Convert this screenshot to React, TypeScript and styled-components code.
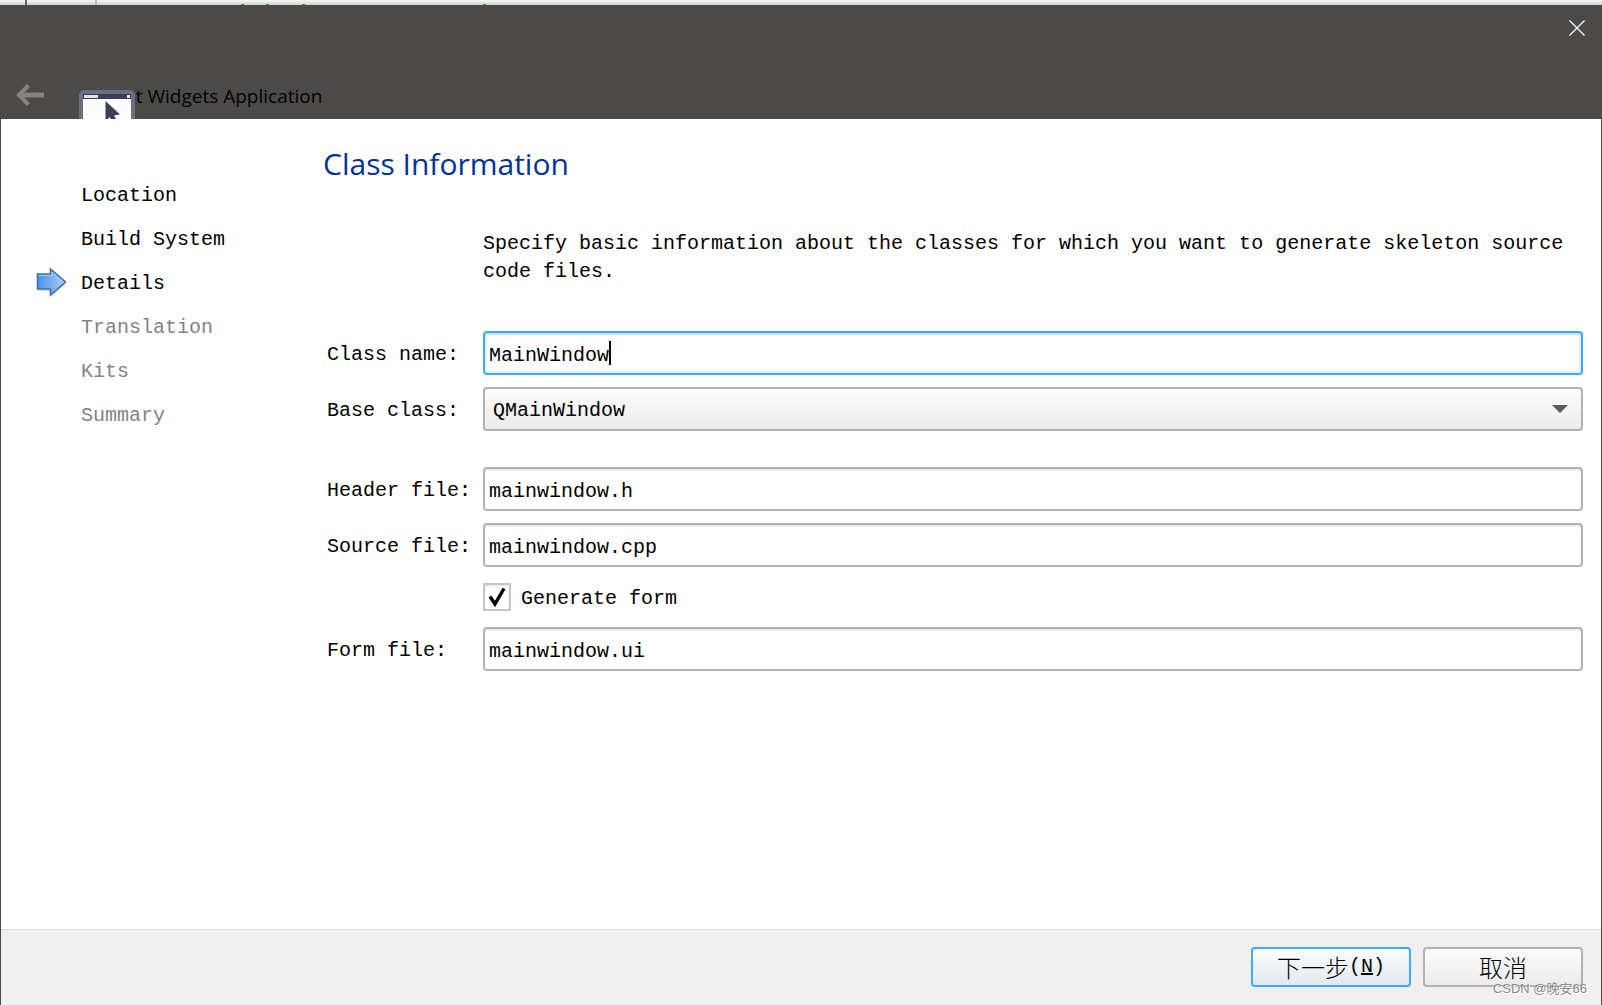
import React, { useState } from "react";
import styled, { createGlobalStyle, css } from "styled-components";

const mono = `"Liberation Mono", "Noto Sans CJK SC", monospace`;
const sans = `"Open Sans", "Noto Sans", "Noto Sans CJK SC", sans-serif`;

const GlobalStyle = createGlobalStyle`
  *, *::before, *::after { box-sizing: border-box; }
  body { margin: 0; font: 20px/28px ${mono}; color: #000; background: #fff; }
  button, input, select { font: inherit; color: inherit; margin: 0; }
`;

const Page = styled.div`
  display: flex;
  flex-direction: column;
  min-height: 100vh;
`;

const EditorStrip = styled.div`
  display: flex;
  height: 5px;
  padding-left: 25px;
  background: linear-gradient(#f6f6f6, #d0d0d0);
`;

const Rule = styled.div<{ $color: string; $gap: number }>`
  width: 2px;
  margin-right: ${(p) => p.$gap}px;
  background: ${(p) => p.$color};
`;

const CodeTip = styled.div<{ $gap: number }>`
  align-self: flex-end;
  width: 3px;
  height: 1px;
  margin-right: ${(p) => p.$gap}px;
  background: #4a9a1c;
`;

const Dialog = styled.div`
  flex: 1;
  display: flex;
  flex-direction: column;
  border: solid #4c4a48;
  border-width: 0 1px;
`;

const Header = styled.header`
  display: flex;
  flex-direction: column;
  justify-content: space-between;
  height: 114px;
  margin: 0 -1px;
  background: #4c4a48;
`;

const TitleBar = styled.div`
  display: flex;
  justify-content: flex-end;
`;

const IconButton = styled.button`
  display: flex;
  align-items: center;
  justify-content: center;
  padding: 0;
  border: 0;
  background: none;
`;

const CloseButton = styled(IconButton)`
  width: 50px;
  height: 45px;
`;

const NavRow = styled.div`
  display: flex;
  align-items: flex-end;
`;

const BackButton = styled(IconButton)`
  margin: 0 35px 12px 16px;
`;

const AppIcon = styled.svg`
  display: block;
  z-index: 1;
`;

const WizardName = styled.h1`
  margin: 0 0 9px -14px;
  font: 400 19px/28px ${sans};
`;

const Body = styled.main`
  flex: 1;
  display: grid;
  grid-template-columns: 322px 1fr;
  padding-right: 18px;
`;

const Steps = styled.ol`
  margin: 0;
  padding: 55px 0 0 35px;
  list-style: none;
`;

const Step = styled.li<{ $pending: boolean }>`
  display: grid;
  grid-template-columns: 45px 1fr;
  align-items: center;
  height: 44px;
  color: ${(p) => (p.$pending ? "#838383" : "#000")};
`;

const StepLabel = styled.span`
  grid-column: 2;
`;

const StepArrow = styled.svg`
  display: block;
`;

const Content = styled.section`
  padding-top: 23px;
`;

const PageTitle = styled.h2`
  margin: 0 0 44px;
  font: 400 30px/44px ${sans};
  color: #003399;
`;

const Intro = styled.p`
  margin: 0 0 45px 160px;
`;

const Form = styled.form`
  display: flex;
  flex-direction: column;
  gap: 12px;
`;

const Row = styled.div<{ $spaced?: boolean }>`
  display: grid;
  grid-template-columns: 156px 1fr;
  align-items: center;
  margin-left: 4px;
  margin-top: ${(p) => (p.$spaced ? 24 : 0)}px;
`;

const Label = styled.label`
  padding-top: 4px;
`;

const Field = styled.div`
  position: relative;
  display: grid;
  align-items: center;
`;

const box = css`
  width: 100%;
  height: 44px;
  border: 2px solid #b2b2b2;
  border-radius: 4px;
  outline: 0;
`;

const TextBox = styled.input<{ $active: boolean }>`
  ${box}
  padding: 4px 4px 0;
  background: #fff;
  box-shadow: inset 0 2px 0 #ececec;
  ${(p) =>
    p.$active &&
    css`
      border-color: #3daaff;
      caret-color: transparent;
      box-shadow: inset 0 2px 0 #cfe2f1, inset 0 0 0 2px #e6f3fd;
    `}
`;

const Caret = styled.span`
  position: absolute;
  width: 2px;
  height: 24px;
  background: #000;
`;

const Select = styled.select`
  ${box}
  appearance: none;
  padding: 4px 40px 0 8px;
  background: linear-gradient(#fdfdfd, #ebebeb);
`;

const SelectArrow = styled.svg`
  position: absolute;
  right: 15px;
  pointer-events: none;
`;

const CheckRow = styled.label`
  display: flex;
  align-items: center;
  gap: 10px;
  height: 28px;
  margin: 4px 0 4px 160px;
`;

const CheckText = styled.span`
  padding-top: 4px;
`;

const CheckBox = styled.input`
  appearance: none;
  display: grid;
  place-items: center;
  width: 28px;
  height: 28px;
  border: 2px solid #c6c6c6;
  background: #fff;
  box-shadow: inset 0 2px 2px #ececec;
`;

const CheckHolder = styled.span`
  position: relative;
  display: grid;
  place-items: center;
`;

const CheckMark = styled.svg`
  position: absolute;
  pointer-events: none;
`;

const Footer = styled.footer`
  position: relative;
  display: flex;
  justify-content: flex-end;
  gap: 12px;
  padding: 17px 18px 18px;
  border-top: 1px solid #dfdfdf;
  background: #f0f0f0;
`;

const PushButton = styled.button<{ $primary?: boolean }>`
  display: flex;
  align-items: center;
  justify-content: center;
  width: 160px;
  height: 40px;
  padding: 0;
  border: 2px solid ${(p) => (p.$primary ? "#3daaff" : "#b2b2b2")};
  border-radius: 4px;
  background: ${(p) =>
    p.$primary ? "linear-gradient(#fcfdfe, #e2e8ed)" : "linear-gradient(#fdfdfd, #ebebeb)"};
`;

const Hanzi = styled.span`
  font-family: "Noto Sans CJK SC", sans-serif;
  font-size: 24px;
  font-weight: 300;
`;

const Watermark = styled.span`
  position: absolute;
  right: 14px;
  bottom: 6px;
  font: 13px/20px "Liberation Sans", "Noto Sans CJK SC", sans-serif;
  color: #8a8a8a;
  text-shadow: 1px 1px 0 #fff;
  pointer-events: none;
`;

const steps = ["Location", "Build System", "Details", "Translation", "Kits", "Summary"];
const current = 2;

function TextRow(props: { id: string; label: string; initial: string; active?: boolean; spaced?: boolean }) {
  const [value, setValue] = useState(props.initial);
  return (
    <Row $spaced={props.spaced}>
      <Label htmlFor={props.id}>{props.label}</Label>
      <Field>
        <TextBox
          id={props.id}
          type="text"
          spellCheck={false}
          $active={!!props.active}
          value={value}
          onChange={(e) => setValue(e.target.value)}
        />
        {props.active && <Caret style={{ left: `calc(6px + ${value.length}ch)` }} />}
      </Field>
    </Row>
  );
}

export default function App() {
  const [form, setForm] = useState(true);
  return (
    <Page>
      <GlobalStyle />
      <EditorStrip>
        <Rule $color="#686868" $gap={68} />
        <Rule $color="#bdbdbd" $gap={144} />
        <CodeTip $gap={22} />
        <CodeTip $gap={33} />
        <CodeTip $gap={178} />
        <CodeTip $gap={0} />
      </EditorStrip>
      <Dialog>
        <Header>
          <TitleBar>
            <CloseButton type="button" aria-label="Close">
              <svg width="16" height="16" viewBox="0 0 16 16" stroke="#fff" strokeWidth="1.3">
                <path d="M.5.5l15 15M15.5.5l-15 15" />
              </svg>
            </CloseButton>
          </TitleBar>
          <NavRow>
            <BackButton type="button" aria-label="Back" disabled>
              <svg width="28" height="24" viewBox="0 0 28 24" fill="none" stroke="#858483">
                <path d="M3 12h25" strokeWidth="5" />
                <path d="M12.500 2.500L3 12l9.500 9.500" strokeWidth="4" />
              </svg>
            </BackButton>
            <AppIcon width="56" height="29" viewBox="0 0 56 29">
              <rect width="56" height="56" rx="5" fill="#6a6f84" />
              <path d="M4 4h48v25H4z" fill="#3a3f58" />
              <path d="M4 9h48v20H4z" fill="#fcfcfc" />
              <path d="M5 5h14v3H5zM48 5h3v3h-3z" fill="#e2e2e6" />
              <path d="M26.500 11L41 24.500l-6 1 2 3.500h-5l-1.500-2-1.500 2h-2.500z" fill="#3a3f58" />
            </AppIcon>
            <WizardName>Qt Widgets Application</WizardName>
          </NavRow>
        </Header>
        <Body>
          <Steps>
            {steps.map((s, i) => (
              <Step key={s} $pending={i > current} aria-current={i === current ? "step" : undefined}>
                {i === current && (
                  <StepArrow width="36" height="34" viewBox="0 0 36 34">
                    <defs>
                      <linearGradient id="arrow" x1="0" x2="1" y1="0" y2="0">
                        <stop offset="0" stopColor="#4a94ee" />
                        <stop offset="1" stopColor="#aecdf2" />
                      </linearGradient>
                    </defs>
                    <path d="M3 12h13V4l14 13-14 13v-6H3z" fill="#000" opacity=".14" />
                    <path
                      d="M1.500 7h13V2l15 13-15 13v-6H1.500z"
                      fill="url(#arrow)"
                      stroke="#4170a6"
                      strokeWidth="1.600"
                    />
                    <path d="M3 8.500h13V5l11 10" fill="none" stroke="#a9cbf4" strokeWidth="1" />
                  </StepArrow>
                )}
                <StepLabel>{s}</StepLabel>
              </Step>
            ))}
          </Steps>
          <Content>
            <PageTitle>Class Information</PageTitle>
            <Intro>
              Specify basic information about the classes for which you want to generate skeleton source code files.
            </Intro>
            <Form>
              <TextRow id="class-name" label="Class name:" initial="MainWindow" active />
              <Row>
                <Label htmlFor="base-class">Base class:</Label>
                <Field>
                  <Select id="base-class" defaultValue="QMainWindow">
                    <option>QMainWindow</option>
                  </Select>
                  <SelectArrow width="16" height="8" viewBox="0 0 16 8">
                    <path d="M0 0h16L8 8z" fill="#5c5c5c" />
                  </SelectArrow>
                </Field>
              </Row>
              <TextRow id="header-file" label="Header file:" initial="mainwindow.h" spaced />
              <TextRow id="source-file" label="Source file:" initial="mainwindow.cpp" />
              <CheckRow>
                <CheckHolder>
                  <CheckBox type="checkbox" checked={form} onChange={(e) => setForm(e.target.checked)} />
                  {form && (
                    <CheckMark width="18" height="20" viewBox="0 0 18 20">
                      <path d="M2 9.500l5 7.500L16 1.500" fill="none" stroke="#000" strokeWidth="3.400" />
                    </CheckMark>
                  )}
                </CheckHolder>
                <CheckText>Generate form</CheckText>
              </CheckRow>
              <TextRow id="form-file" label="Form file:" initial="mainwindow.ui" />
            </Form>
          </Content>
        </Body>
        <Footer>
          <PushButton type="button" $primary>
            <Hanzi>下一步</Hanzi>(<u>N</u>)
          </PushButton>
          <PushButton type="button">
            <Hanzi>取消</Hanzi>
          </PushButton>
          <Watermark>CSDN @晚安66</Watermark>
        </Footer>
      </Dialog>
    </Page>
  );
}
